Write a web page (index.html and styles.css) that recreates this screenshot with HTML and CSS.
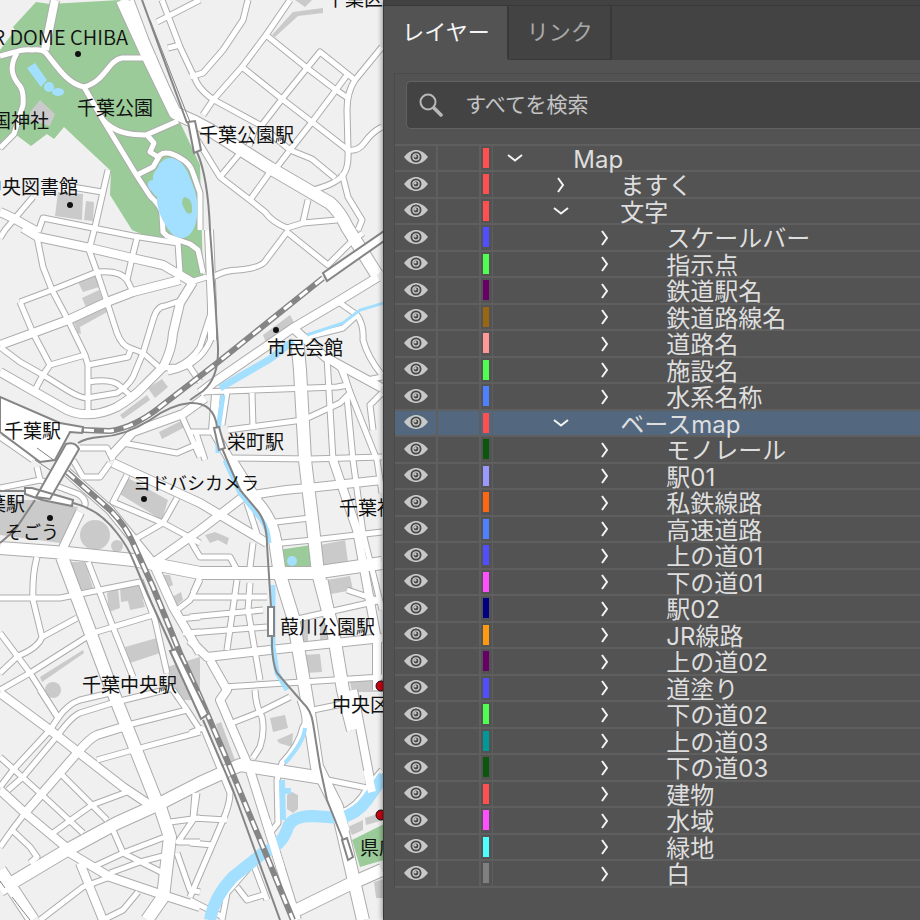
FILE: index.html
```
<!DOCTYPE html>
<html lang="ja">
<head>
  <meta charset="UTF-8" />
  <meta name="viewport" content="width=device-width, initial-scale=1.0" />
  <title>Map</title>
  <link rel="stylesheet" href="styles.css">
</head>
<body>
  <svg class="icon-defs" aria-hidden="true">
    <symbol id="icon-eye" viewBox="0 0 24 16">
      <path d="M0 8C4 3 8 1 12 1s8 2 12 7c-4 5-8 7-12 7S4 13 0 8z" fill="#c8c8c8" />
      <circle cx="12" cy="8" r="4.6" fill="#c8c8c8" stroke="#484848" stroke-width="1.8" />
      <circle cx="12" cy="8" r="2.4" fill="#484848" />
      <circle cx="11.3" cy="7.2" r="1.2" fill="#c8c8c8" />
    </symbol>
    <symbol id="icon-right" viewBox="0 0 16 16">
      <path d="M5 1l5 7-5 7" fill="none" stroke="#f4f4f4" stroke-width="2" />
    </symbol>
    <symbol id="icon-down" viewBox="0 0 16 16">
      <path d="M1 5l7 5.500 7-5.500" fill="none" stroke="#f4f4f4" stroke-width="2" />
    </symbol>
  </svg>

  <div class="workspace">
    <main class="map">
      <svg class="map-art" viewBox="0 0 384 920" preserveAspectRatio="xMinYMin slice" role="img" aria-label="千葉駅周辺">
        <defs>
          <g id="roads-small">
            <!-- park -->
            <path d="M17 53C8 68 13 78 20 86Q24 92 23 105L14 134 0 148" />
            <path d="M84 87L103 120 137 176 150 196Q161 206 162 214L163 232 167 236 190 244 198 250 203 273" />
            <path d="M103 120C115 133 130 135 146 135L178 121M147 135L154 143 150 152 158 157" />
            <path d="M137 175L153 167 160 155Q167 150 180 158 190 163 193 173L200 193V230" />
            <path d="M0 56L15 52Q24 49 32 50 42 49 46 53C58 68 68 84 84 87 105 82 108 60 122 58H156" />
            <!-- north east -->
            <path d="M131 0L146 40 172 100M162 0L180 47 197 83Q202 92 214 100L260 125 290 150 312 159 335 178" />
            <path d="M157 22L200 0M168 48L180 45M190 77L203 73 223 50 243 20 248 0" />
            <path d="M290 0L266 35 242 67 213 100 203 115M266 35L307 68 336 90 348 98" />
            <path d="M262 125L282 99 307 68 320 52 355 80M347 75L336 90 312 122 290 150 277 167" />
            <path d="M242 67L282 99 312 122 348 150Q358 152 365 142T382 127" />
            <path d="M382 47L355 80Q347 92 347 110L348 150Q349 168 343 175 336 184 313 190" />
            <path d="M342 173L348 197 362 220 358 230M308 200L303 222M337 220L303 223 287 228Q272 222 265 212L250 200 220 177 193 133" />
            <path d="M240 153L220 177M270 172L250 200M255 128L249 146" />
            <!-- north west -->
            <path d="M108 170L95 227M72 187L102 192M33 197L5 230 0 238M38 232L43 218 133 236 178 243 180 273" />
            <path d="M37 237L43 267 52 290 68 320 85 355 88 365V413" />
            <path d="M95 227L89 250 97 272 107 302 117 333Q122 346 130 348L143 353 160 368" />
            <path d="M20 302L52 290 97 272Q120 270 127 280L133 292M137 238L132 258 127 280" />
            <path d="M20 302L33 333 50 365 43 375 35 390M50 365L85 355M88 365L128 357 131 349M88 382Q112 378 120 386L132 397" />
            <path d="M0 347L20 362 43 375 67 390Q80 398 87 398L117 393Q128 386 133 377L143 353 153 320Q157 306 165 306L180 301" />
            <path d="M160 368L177 367Q192 360 200 347L212 310M187 363L200 382M168 372Q205 365 214 330" />
            <path d="M190 282L207 277M213 277Q225 270 238 270 262 268 266 260L287 232 328 265 353 240 363 233" />
            <path d="M123 443L177 453 200 443M180 412L200 457M80 448H107L113 460M0 437L33 460M190 432H212M195 430L205 460" />
            <!-- centre east -->
            <path d="M340 303L357 315Q364 325 363 340 368 358 382 375M307 337L343 328 357 315" />
            <path d="M200 392L337 387 348 385M227 392L222 425M252 393L253 427M228 430L303 420 340 403 350 393 343 370 325 357" />
            <path d="M327 357L333 460M347 397L353 460 363 533 382 610M340 367L377 460 382 493M382 393L370 405 373 430M367 380L382 377" />
            <path d="M227 458L310 459 382 457M267 523L310 518M272 544L313 540 382 532" />
            <path d="M190 540L200 557 230 557 237 570M253 543L250 567M247 503L258 537M200 577L193 593M190 597H267M190 617L263 610M190 633L267 627" />
            <path d="M237 580L227 650M250 583L248 610 260 680M325 580L333 620M293 620L382 600M223 687L382 677M347 590L377 600" />
            <!-- centre west -->
            <path d="M73 460L83 477H100L110 463M0 488L40 480 37 467M40 480L78 494Q88 500 84 508" />
            <path d="M127 475L113 502 163 523 200 543M177 498L163 523 137 538" />
            <path d="M37 557Q32 575 33 600L42 637Q38 648 18 656L0 673M0 598H60L140 582M88 562L100 593 113 627 133 677" />
            <path d="M42 637L77 618M0 633L30 673 58 717M0 690L30 673 93 633 153 615M140 580L155 620 167 673" />
            <path d="M177 610L190 600 200 580M178 619L200 617M183 633L200 632" />
            <!-- south west -->
            <path d="M40 690L58 718 50 730 13 770 0 787M8 790L23 777 58 735Q72 716 80 713L112 703 173 688" />
            <path d="M58 718Q68 704 80 700L110 693M128 725L187 710M97 760L133 750 200 732M173 690L187 710 200 730" />
            <path d="M0 757L40 793 83 833M62 775L92 805 107 820M53 833L68 822 92 805 127 792M25 813L12 830 0 847M12 830L30 847 37 857 30 863" />
            <path d="M113 830L123 853 163 873M93 867L123 853 165 837M110 873L140 862 167 855M40 920L83 887 110 877M138 892L123 910 103 920" />
            <path d="M170 822L200 818M197 793L193 820 178 842H200M177 853L190 890 200 892" />
            <!-- south east -->
            <path d="M203 727L230 793Q230 804 223 820L190 897M190 733L203 728M195 793L193 818 227 820M190 843L213 845" />
            <path d="M227 725L260 712 290 697M255 690Q256 707 262 717 265 732 260 747L253 758M313 710L347 703" />
            <path d="M300 700Q308 722 303 727 299 745 282 763L277 780 278 823 270 833" />
            <path d="M222 920L227 893 253 863 267 900M237 887L247 900 263 895M190 900L223 917M323 779L367 788 382 770M340 813Q358 806 367 788" />
          </g>
          <g id="roads-medium">
            <path d="M55 0L45 50M0 212L13 218 38 232M0 345L33 333 68 320 107 302 133 292 180 280" />
            <path d="M23 228L38 237 90 248 132 258 163 265 192 282" />
            <path d="M0 372L35 392 67 410Q90 420 117 407 135 396 143 387L163 367Q172 350 173 333L180 303 193 282" />
            <path d="M378 277L337 302 293 328 213 383 200 393M293 328L325 357 382 388M209 230L212 307V340" />
            <path d="M205 398L183 414 133 432 110 457M113 463L200 503 267 543" />
            <path d="M153 563L200 530 243 497Q275 490 308 488L382 480M333 460L357 530 377 640V690" />
            <path d="M67 472L110 510 153 563 173 607 200 653M190 640L207 657 270 650 382 638M216 395L213 430 230 460" />
            <path d="M210 660L227 690 220 700 250 770 297 920M353 690L372 790" />
            <path d="M0 693L50 730 78 752 123 787 150 805M25 813L78 752Q90 738 97 735L123 727" />
            <path d="M0 790L25 813 67 848M70 853L110 877 163 895 200 907M80 863L103 920M80 512L63 548" />
          </g>
          <g id="roads-large">
            <path d="M122 0L148 57 175 113 195 122 210 130 270 168 330 203Q340 212 347 227L377 275" />
            <path d="M297 338L300 370 305 460 313 527 318 573 333 630 343 690 353 730" />
            <path d="M0 548L67 553 133 560 200 573H273L313 573 382 563" />
            <path d="M62 557L107 677 157 803M0 890L67 850 117 823 157 805 200 783 240 765 323 778" />
            <path d="M230 460L257 503Q272 520 275 540L280 575 293 617 307 700 317 767 337 807 363 920" />
            <path d="M160 807L170 837 163 897 147 920M0 870L33 920M297 910L350 884 382 870" />
          </g>
        </defs>

        <rect class="ground" width="100%" height="100%" />

        <g class="green">
          <path d="M36 2L50 4 120 0 178 118 200 165 203 275 194 280 181 274V245L150 238 132 230 110 195 111 171 64 127 54 139 47 134 31 146 15 134 0 150V50L15 30 13 27z" />
          <path d="M278 550L311 545 315 568 281 571zM352 840L384 824V860L360 867z" />
        </g>

        <g class="building">
          <path d="M40 100L55 114 50 126 30 120V112zM58 192L83 194 82 220 55 216zM86 201L94 202 93 221 84 220z" />
          <path d="M272 35L293 12 323 8V13L298 16 275 37zM295 0H312L305 7z" />
          <path d="M78 282L97 276 99 287 83 292zM82 298L99 290 103 300 86 307zM73 320L107 307V312L80 327 81 334 78 333z" />
          <path d="M120 415L147 395 150 400 123 419zM148 388L162 379 168 387 155 398zM159 432L183 420 185 427 162 439z" />
          <path d="M263 335L290 315 295 324 266 343z" />
          <path d="M0 500H35L78 507 60 543 0 535zM68 562H85L93 588 79 591zM128 478L168 500 162 520 118 493z" />
          <path d="M107 593L118 588 120 608 109 612zM120 587L142 584 143 600 145 607 130 610 128 601 121 602zM125 647L157 638 160 653 130 663z" />
          <path d="M40 677L83 650 84 653 42 682zM162 575H170L173 585 167 588zM172 597L181 592 183 600 177 605zM167 667L200 657V700H175z" />
          <path d="M205 535L215 532 229 538 227 545 218 540 210 543zM320 545L345 540 348 562 323 567zM327 580L350 576 353 590 331 594z" />
          <path d="M297 623L308 620V643H298zM320 623L330 621V640L320 641zM303 655L320 654 322 672 305 673zM350 682L384 678V692H352z" />
          <path d="M216 724L221 722 235 760 226 764zM270 718L285 715 288 728 273 732zM277 740L293 733 292 747 279 743zM287 795L292 792 298 795V809L293 813 287 809z" />
          <path d="M348 827L363 820V830L352 835zM365 818L384 812V820L366 825zM374 882L384 879V898H376z" />
          <circle cx="95" cy="535" r="15" /><circle cx="117" cy="546" r="6" /><circle cx="53" cy="690" r="8" />
        </g>

        <g class="road-edge"><use href="#roads-small" /></g>
        <g class="road-edge medium"><use href="#roads-medium" /></g>
        <g class="road-edge large"><use href="#roads-large" /></g>
        <g class="road-fill"><use href="#roads-small" /></g>
        <g class="road-fill medium"><use href="#roads-medium" /></g>
        <g class="road-fill large"><use href="#roads-large" /></g>

        <g class="pond">
          <path d="M27 68L35 63 47 80 41 87zM165 159C175 155 185 163 190 178 196 192 200 205 196 222 192 238 182 242 172 234 162 222 156 208 157 196 154 197 154 192 150 190 146 184 148 180 153 180 152 172 158 170 159 164z" />
          <ellipse cx="49" cy="87" rx="5" ry="5" /><ellipse cx="58" cy="92" rx="6" ry="4" /><circle cx="292" cy="561" r="5" />
        </g>
        <path class="green" d="M184 197Q193 198 192 212 188 217 184 208 180 203 184 197z" />
        <g class="river">
          <path d="M384 303L360 310 343 323 307 335" stroke-width="3" />
          <path d="M293 341L270 359 220 388" stroke-width="7" />
          <path d="M223 395L218 430V453M225 460L240 493 261 519Q268 528 269 543M273 585V647L277 673 287 690" stroke-width="5" />
          <path d="M305 728Q304 742 285 763" stroke-width="4" />
          <path d="M282 780L283 820M283 791H291" stroke-width="6" />
          <path d="M210 920Q214 897 233 877L263 853Q281 846 287 830 290 816 313 816L340 818Q357 814 367 800L384 776" stroke-width="12" />
        </g>
        <!-- bridges -->
        <path class="road-fill medium" d="M266 820L281 869M367 770L372 792" />
        <path class="road-fill large" d="M334 800L344 832" />

        <!-- railways -->
        <path class="station" d="M0 397L60 423 83 427 82 433 70 432 55 460 40 462 0 432z" />
        <path class="jr" d="M323 278L217 363 160 407Q135 427 110 431L83 430" />
        <path class="jr-dash" d="M323 278L217 363 160 407Q135 427 110 431L83 430" />
        <path class="jr" d="M67 472L110 510Q126 526 133 543L153 587 180 653 200 697 227 760 263 847 293 920" />
        <path class="jr-dash" d="M67 472L110 510Q126 526 133 543L153 587 180 653 200 697 227 760 263 847 293 920" />
        <g class="rail">
          <path d="M142 0L187 123M197 152Q208 177 210 230L215 297 218 347Q219 378 203 391L190 400M78 443Q86 438 100 437 125 436 150 420 170 405 190 403 214 402 217 427" />
          <path d="M222 448L227 460 240 490 257 510Q267 522 267 545L271 607M272 637V647Q273 665 277 673L303 703Q311 710 313 723L320 767 327 800 343 840" />
          <path d="M73 503Q99 509 117 533 128 547 133 560L147 593 173 650M203 720L233 790 280 920M0 491H25M0 543L15 530 35 500" />
          <path d="M35 460L50 470M37 448L55 461M0 881L5 888M12 897L30 920M150 20L190 122" stroke-width="1" />
        </g>
        <g class="station">
          <path d="M188 122L195 121 201 150 194 153zM323 273L384 231V241L327 281z" />
          <path d="M25 488H32L73 500 72 506 42 500 25 494zM66 444Q75 441 79 449L50 499 36 497z" />
          <path d="M214 428L219 427 225 448 219 450zM268 607H274V636H268zM170 651L176 649 208 714 201 719zM342 840L347 838 353 857 348 860z" />
        </g>

        <g class="point">
          <circle cx="78" cy="54" r="3" /><circle cx="70" cy="205" r="3" /><circle cx="276" cy="330" r="3" />
          <circle cx="144" cy="499" r="3" /><circle cx="50" cy="518" r="3" />
        </g>
        <g class="office"><circle cx="381" cy="686" r="5" /><circle cx="381" cy="815" r="5" /></g>

        <g class="place">
          <text class="latin" x="128" y="45" text-anchor="end">R DOME CHIBA</text>
          <text x="77" y="115">千葉公園</text>
          <text x="-8" y="128">国神社</text>
          <text x="-17" y="194">中央図書館</text>
          <text x="199" y="142">千葉公園駅</text>
          <text x="326" y="6">千葉区役所</text>
          <text x="267" y="355">市民会館</text>
          <text x="4" y="438">千葉駅</text>
          <text x="227" y="449">栄町駅</text>
          <text class="kana" x="133" y="490">ヨドバシカメラ</text>
          <text x="-13" y="511">葉駅</text>
          <text class="kana" x="5" y="539">そごう</text>
          <text x="339" y="515">千葉神社</text>
          <text x="280" y="634">葭川公園駅</text>
          <text x="82" y="692">千葉中央駅</text>
          <text x="332" y="712">中央区役所</text>
          <text x="360" y="855">県庁</text>
        </g>
      </svg>
    </main>

    <aside class="panel">
      <div class="tabs" role="tablist">
        <button class="tab active" role="tab" aria-selected="true">レイヤー</button>
        <button class="tab" role="tab" aria-selected="false">リンク</button>
      </div>
      <div class="panel-body">
        <div class="search">
          <label for="layerSearch" aria-label="検索">
            <svg class="search-icon" viewBox="0 0 24 24">
              <circle cx="9" cy="9" r="7.500" fill="none" stroke="#b8b8b8" stroke-width="2" />
              <path d="M15 15l7 7" stroke="#b8b8b8" stroke-width="3.500" stroke-linecap="round" />
            </svg>
          </label>
          <input type="text" id="layerSearch" placeholder="すべてを検索" />
        </div>
        <ul class="layers" id="layers"></ul>
      </div>
    </aside>
  </div>

  <script src="script.js"></script>
</body>
</html>
```
FILE: styles.css
```
/* Reset & Global Styles */
* {
  margin: 0;
  padding: 0;
  box-sizing: border-box;
}
body {
  background: #535353;
  color: #dedede;
  font-family: Inter, 'Noto Sans CJK JP', sans-serif;
}
button {
  background: none;
  border: none;
  color: inherit;
  font: inherit;
  cursor: pointer;
}
.icon-defs {
  position: absolute;
  width: 0;
  height: 0;
}
.workspace {
  display: grid;
  grid-template-columns: 5fr 7fr;
  height: 100vh;
  overflow: hidden;
}
/* Map */
.map {
  min-width: 0;
  overflow: hidden;
}
.map-art {
  display: block;
  width: 100%;
  height: 100%;
}
.ground {
  fill: #f0f0f0;
}
.green {
  fill: #9acb98;
}
.building {
  fill: #cacaca;
}
.road-edge,
.road-fill {
  fill: none;
  stroke-linejoin: round;
}
.road-edge {
  stroke: #acacac;
  stroke-width: 7px;
}
.road-edge.medium {
  stroke-width: 10px;
}
.road-edge.large {
  stroke-width: 14px;
}
.road-fill {
  stroke: #fff;
  stroke-width: 5px;
}
.road-fill.medium {
  stroke-width: 8px;
}
.road-fill.large {
  stroke-width: 12px;
}
.pond {
  fill: #a3dfff;
}
.river {
  fill: none;
  stroke: #a3dfff;
}
.rail {
  fill: none;
  stroke: #858585;
  stroke-width: 2px;
}
.jr {
  fill: none;
  stroke: #858585;
  stroke-width: 6px;
}
.jr-dash {
  fill: none;
  stroke: #fff;
  stroke-width: 3px;
  stroke-dasharray: 10 10;
}
.station {
  fill: #fff;
  stroke: #858585;
  stroke-width: 2px;
}
.point {
  fill: #111;
}
.office {
  fill: #d0000f;
  stroke: #111;
}
.place {
  fill: #111;
  font-family: 'Noto Sans CJK JP', sans-serif;
  font-size: 19px;
}
.place .kana {
  font-size: 18px;
}
.place .latin {
  font-size: 20px;
  font-weight: 350;
}
/* Layer panel */
.panel {
  position: relative;
  min-width: 0;
  background: #535353;
  border-top: 5px solid #424242;
  border-left: 1px solid #383838;
  box-shadow: -1px 0 5px rgba(0, 0, 0, 0.4);
}
.tabs {
  display: flex;
  height: 55px;
  background: #434343;
  border-top: 1px solid #383838;
}
.tab {
  padding: 0 17px 5px 18px;
  background: #434343;
  border-right: 2px solid #393939;
  border-bottom: 1px solid #393939;
  color: #a8a8a8;
  font-size: 22px;
}
.tab.active {
  background: #535353;
  border-bottom-color: #535353;
  color: #f4f4f4;
}
.panel-body {
  margin: 13px 0 0 10px;
  border-top: 1px solid #4a4a4a;
  border-left: 1px solid #4a4a4a;
}
.search {
  display: flex;
  align-items: center;
  height: 48px;
  margin: 7px 0 15px 11px;
  padding-left: 12px;
  background: #434343;
  border: 1px solid #626262;
  border-right: none;
  border-radius: 5px 0 0 5px;
}
.search-icon {
  display: block;
  width: 24px;
  height: 24px;
}
.search input {
  flex: 1;
  min-width: 0;
  margin-left: 22px;
  padding-bottom: 2px;
  background: none;
  border: none;
  outline: none;
  color: #dedede;
  font-family: inherit;
  font-size: 21px;
}
.search input::placeholder {
  color: #c4c4c4;
  opacity: 1;
}
.layers {
  list-style: none;
  border-bottom: 2px solid #5f5f5f;
}
.layer {
  display: flex;
  height: 26px;
  border-top: 2px solid #5f5f5f;
}
.layer:nth-child(even) {
  height: 27px;
}
.layer.selected {
  background: #53687e;
}
.visibility,
.lock {
  flex: none;
  width: 43px;
  border-right: 2px solid #5f5f5f;
}
.visibility {
  padding-bottom: 2px;
}
.visibility svg {
  display: block;
  width: 24px;
  height: 16px;
  margin: 0 auto;
}
.swatch {
  flex: none;
  width: 12px;
  padding: 2px 3px 2px 2px;
  border-right: 1px solid #5f5f5f;
}
.swatch span {
  display: block;
  height: 20px;
}
.toggle {
  flex: none;
  width: 16px;
  margin-left: 14px;
}
.toggle svg {
  display: block;
  width: 16px;
  height: 16px;
}
.name {
  margin-left: 50px;
  font-size: 24px;
  line-height: 28px;
  white-space: nowrap;
}
.level-1 .toggle {
  margin-left: 60px;
}
.level-2 .toggle {
  margin-left: 104px;
}
.level-1 .name {
  margin-left: 51px;
}
.level-2 .name {
  margin-left: 53px;
}
```
FILE: script.js
```
// name, level, color, open
const layers = [
  ['Map', 0, '#ff4f4f', true],
  ['ますく', 1, '#ff4f4f'],
  ['文字', 1, '#ff4f4f', true],
  ['スケールバー', 2, '#4f4fff'],
  ['指示点', 2, '#4fff4f'],
  ['鉄道駅名', 2, '#660066'],
  ['鉄道路線名', 2, '#996611'],
  ['道路名', 2, '#ff9999'],
  ['施設名', 2, '#4fff4f'],
  ['水系名称', 2, '#4f80ff'],
  ['ベースmap', 1, '#ff4f4f', true],
  ['モノレール', 2, '#0d560d'],
  ['駅01', 2, '#9999ff'],
  ['私鉄線路', 2, '#ff6610'],
  ['高速道路', 2, '#4f80ff'],
  ['上の道01', 2, '#4f4fff'],
  ['下の道01', 2, '#ff4fff'],
  ['駅02', 2, '#000080'],
  ['JR線路', 2, '#ff9910'],
  ['上の道02', 2, '#660066'],
  ['道塗り', 2, '#4f4fff'],
  ['下の道02', 2, '#4fff4f'],
  ['上の道03', 2, '#009999'],
  ['下の道03', 2, '#0d560d'],
  ['建物', 2, '#ff4f4f'],
  ['水域', 2, '#ff4fff'],
  ['緑地', 2, '#4fffff'],
  ['白', 2, '#808080']
];
const selectedLayer = 'ベースmap';

const list = document.getElementById('layers');

layers.forEach(([name, level, color, open]) => {
  const row = document.createElement('li');
  row.className = `layer level-${level}`;
  if (name === selectedLayer) {
    row.classList.add('selected');
  }
  row.innerHTML = `
    <button class="visibility" aria-label="${name} 表示"><svg><use href="#icon-eye" /></svg></button>
    <span class="lock"></span>
    <span class="swatch"><span style="background: ${color}"></span></span>
    <button class="toggle" aria-label="${name} 開閉"><svg><use href="#icon-${open ? 'down' : 'right'}" /></svg></button>
    <span class="name">${name}</span>`;
  list.appendChild(row);
});
```
